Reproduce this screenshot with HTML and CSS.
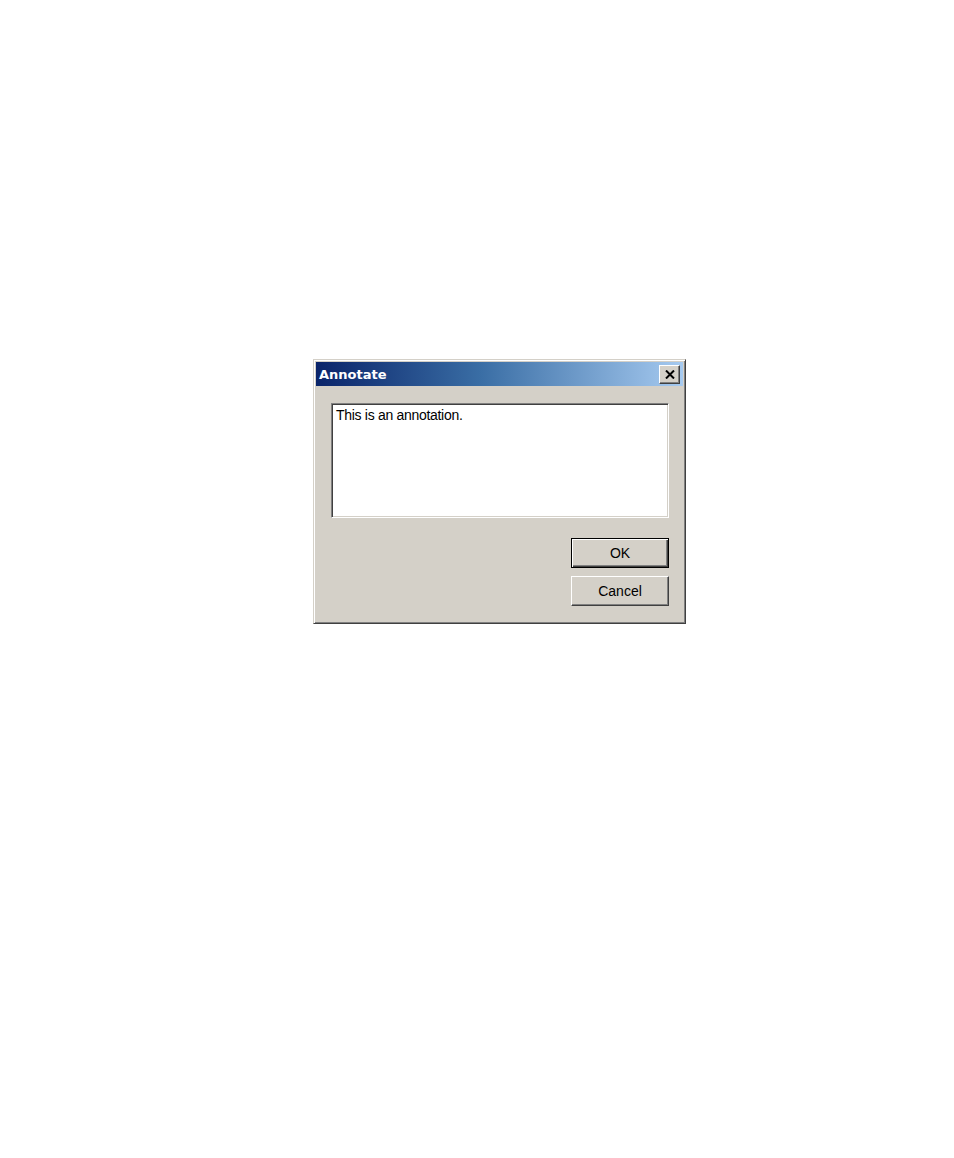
FILE: index.html
```html
<!DOCTYPE html>
<html lang="en">
<head>
<meta charset="utf-8">
<title>Annotate</title>
<link rel="stylesheet" href="styles.css">
</head>
<body>
<div class="page">
  <div class="dialog">
    <div class="titlebar">
      <span class="title">Annotate</span>
      <button class="close" type="button" aria-label="Close">
        <svg width="10" height="9" viewBox="0 0 10 9" aria-hidden="true">
          <path d="M1 0.5 L9 8.5 M9 0.5 L1 8.5" stroke="#000" stroke-width="2" fill="none"/>
        </svg>
      </button>
    </div>
    <div class="content">
      <div class="textbox">This is an annotation.</div>
      <div class="buttons">
        <button class="btn btn-default" type="button">OK</button>
        <button class="btn" type="button">Cancel</button>
      </div>
    </div>
  </div>
</div>
</body>
</html>
```

FILE: styles.css
```css
html, body {
  margin: 0;
  background: #ffffff;
}

.page {
  padding: 359px 0 0 313px;
}

.dialog {
  width: 373px;
  height: 265px;
  box-sizing: border-box;
  background: #d4d0c8;
  border: 1px solid;
  border-color: #d4d0c8 #404040 #404040 #d4d0c8;
  box-shadow: inset 1px 1px 0 #ffffff, inset -1px -1px 0 #808080;
  padding: 2px;
  display: flex;
  flex-direction: column;
}

.titlebar {
  height: 24px;
  flex: none;
  background: linear-gradient(90deg, #0a246a 0%, #3a6ea5 45%, #a6caf0 100%);
  display: flex;
  align-items: center;
  justify-content: space-between;
  padding: 0 3px 0 3px;
}

.title {
  font-family: "DejaVu Sans", Verdana, sans-serif;
  font-weight: bold;
  font-size: 13px;
  color: #ffffff;
  line-height: 1;
}

.close {
  width: 21px;
  height: 19px;
  box-sizing: border-box;
  padding: 0;
  margin: 0;
  background: #d4d0c8;
  border: 1px solid;
  border-color: #ffffff #404040 #404040 #ffffff;
  box-shadow: inset -1px -1px 0 #808080;
  display: flex;
  align-items: center;
  justify-content: center;
}

.close svg {
  display: block;
}

.content {
  flex: 1;
  padding: 17px 14px 0 15px;
  display: flex;
  flex-direction: column;
}

.textbox {
  height: 115px;
  box-sizing: border-box;
  background: #ffffff;
  border: 1px solid;
  border-color: #808080 #ffffff #ffffff #808080;
  box-shadow: inset 1px 1px 0 #404040, inset -1px -1px 0 #d4d0c8;
  padding: 3px 4px;
  font-family: "Liberation Sans", Arial, sans-serif;
  font-size: 14px;
  letter-spacing: -0.3px;
  line-height: 16px;
  color: #000000;
}

.buttons {
  margin-top: 20px;
  display: flex;
  flex-direction: column;
  align-items: flex-end;
  gap: 8px;
}

.btn {
  width: 98px;
  height: 30px;
  box-sizing: border-box;
  margin: 0;
  padding: 0;
  background: #d4d0c8;
  border: 1px solid;
  border-color: #ffffff #404040 #404040 #ffffff;
  box-shadow: inset -1px -1px 0 #808080;
  font-family: "Liberation Sans", Arial, sans-serif;
  font-size: 14px;
  color: #000000;
}

.btn-default {
  border: 1px solid #000000;
  box-shadow: inset 1px 1px 0 #ffffff, inset -1px -1px 0 #404040, inset -2px -2px 0 #808080;
}
```
